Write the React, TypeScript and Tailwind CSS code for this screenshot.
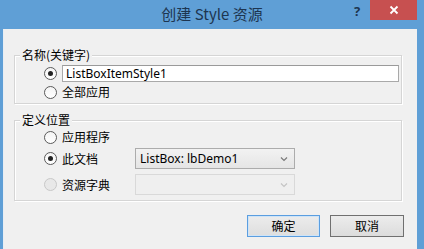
import React from "react";

const cjk = { fontFamily: '"Noto Sans CJK SC", "Noto Sans", sans-serif' };
const latin = { fontFamily: '"Noto Sans", "Noto Sans CJK SC", sans-serif' };

function Radio({ checked = false, disabled = false }: { checked?: boolean; disabled?: boolean }) {
  return (
    <div
      className={
        "w-[13px] h-[13px] rounded-full border flex items-center justify-center shrink-0 " +
        (disabled
          ? "border-[#c8c8c8] bg-[#e8e8e8]"
          : "border-[#5a5a5a] bg-gradient-to-b from-[#f4f4f4] to-[#ffffff]")
      }
    >
      {checked && <div className="w-[5px] h-[5px] rounded-full bg-[#222222]" />}
    </div>
  );
}

function Chevron({ disabled = false }: { disabled?: boolean }) {
  return (
    <svg width="8" height="6" viewBox="0 0 8 6" className="shrink-0">
      <path d="M1 1.5 L4 4.5 L7 1.5" fill="none" stroke={disabled ? "#c4c4c4" : "#7a7a7a"} strokeWidth="1.2" />
    </svg>
  );
}

function Group({ title, children, className }: { title: string; children: React.ReactNode; className: string }) {
  return (
    <div
      className={
        "relative border border-[#d5d5d5] shadow-[inset_1px_1px_0_#ffffff,1px_1px_0_#ffffff] " + className
      }
    >
      <div
        className="absolute left-[5px] -top-[8px] px-[2px] bg-[#f0f0f0] text-[12px] leading-[14px] text-black"
        style={cjk}
      >
        {title}
      </div>
      {children}
    </div>
  );
}

export default function App() {
  return (
    <div className="w-[424px] h-[249px] bg-[#5f9fd6] flex flex-col overflow-hidden">
      <div className="relative h-[29px] shrink-0 flex items-center justify-center">
        <div className="text-[15px] leading-[20px] text-[#1d3550] mt-[-1px]" style={cjk}>
          创建 Style 资源
        </div>
        <div
          className="absolute left-[354px] top-[2px] text-[13px] font-bold leading-[18px] text-[#1d3550]"
          style={latin}
        >
          ?
        </div>
        <div className="absolute left-[370px] top-0 w-[47px] h-[20px] bg-[#c75050] flex items-center justify-center">
          <svg width="10" height="10" viewBox="0 0 10 10">
            <path d="M1.5 1.5 L8.5 8.5 M8.5 1.5 L1.5 8.5" stroke="#ffffff" strokeWidth="1.8" />
          </svg>
        </div>
      </div>
      <div className="flex-1 ml-[3px] mr-[7px] bg-[#f0f0f0] border-l border-[#e8eef4] flex flex-col">
        <Group title="名称(关键字)" className="mt-[26px] ml-[10px] mr-[15px] h-[49px] pl-[29px] pr-[2px] pt-[9px]">
          <div className="flex items-center h-[17px] gap-[5px]">
            <Radio checked />
            <div
              className="flex-1 h-[17px] bg-white border border-[#a9a9a9] border-t-[#9a9a9a] flex items-center pl-[3px] text-[12px] text-black"
              style={latin}
            >
              ListBoxItemStyle1
            </div>
          </div>
          <div className="flex items-center h-[16px] mt-[2px] gap-[5px]">
            <Radio />
            <span className="text-[12px] leading-[16px] text-black" style={cjk}>
              全部应用
            </span>
          </div>
        </Group>

        <Group title="定义位置" className="mt-[16px] ml-[10px] mr-[15px] h-[81px] pl-[29px] pt-[8px]">
          <div className="flex items-center h-[16px] gap-[5px]">
            <Radio />
            <span className="text-[12px] leading-[16px] text-black" style={cjk}>
              应用程序
            </span>
          </div>
          <div className="flex items-center h-[21px] mt-[3px]">
            <div className="flex items-center gap-[5px] w-[91px]">
              <Radio checked />
              <span className="text-[12px] leading-[16px] text-black" style={cjk}>
                此文档
              </span>
            </div>
            <div
              className="w-[160px] h-[21px] border border-[#acacac] bg-gradient-to-b from-[#f2f2f2] to-[#e5e5e5] flex items-center justify-between pl-[4px] pr-[6px] text-[12px] text-black"
              style={latin}
            >
              <span>ListBox: lbDemo1</span>
              <Chevron />
            </div>
          </div>
          <div className="flex items-center h-[21px] mt-[5px]">
            <div className="flex items-center gap-[5px] w-[91px]">
              <Radio disabled />
              <span className="text-[12px] leading-[16px] text-black" style={cjk}>
                资源字典
              </span>
            </div>
            <div className="w-[160px] h-[21px] border border-[#d9d9d9] bg-[#efefef] flex items-center justify-end pr-[6px]">
              <Chevron disabled />
            </div>
          </div>
        </Group>

        <div className="flex justify-end gap-[10px] mt-[14px] mr-[13px]">
          <div
            className="w-[73px] h-[22px] border border-[#5b9ee0] bg-gradient-to-b from-[#ececec] to-[#dedede] shadow-[inset_0_0_0_1px_#cfe4f7] flex items-center justify-center text-[12px] text-black"
            style={cjk}
          >
            确定
          </div>
          <div
            className="w-[74px] h-[22px] border border-[#707070] bg-gradient-to-b from-[#ececec] to-[#dcdcdc] flex items-center justify-center text-[12px] text-black"
            style={cjk}
          >
            取消
          </div>
        </div>
      </div>
    </div>
  );
}
